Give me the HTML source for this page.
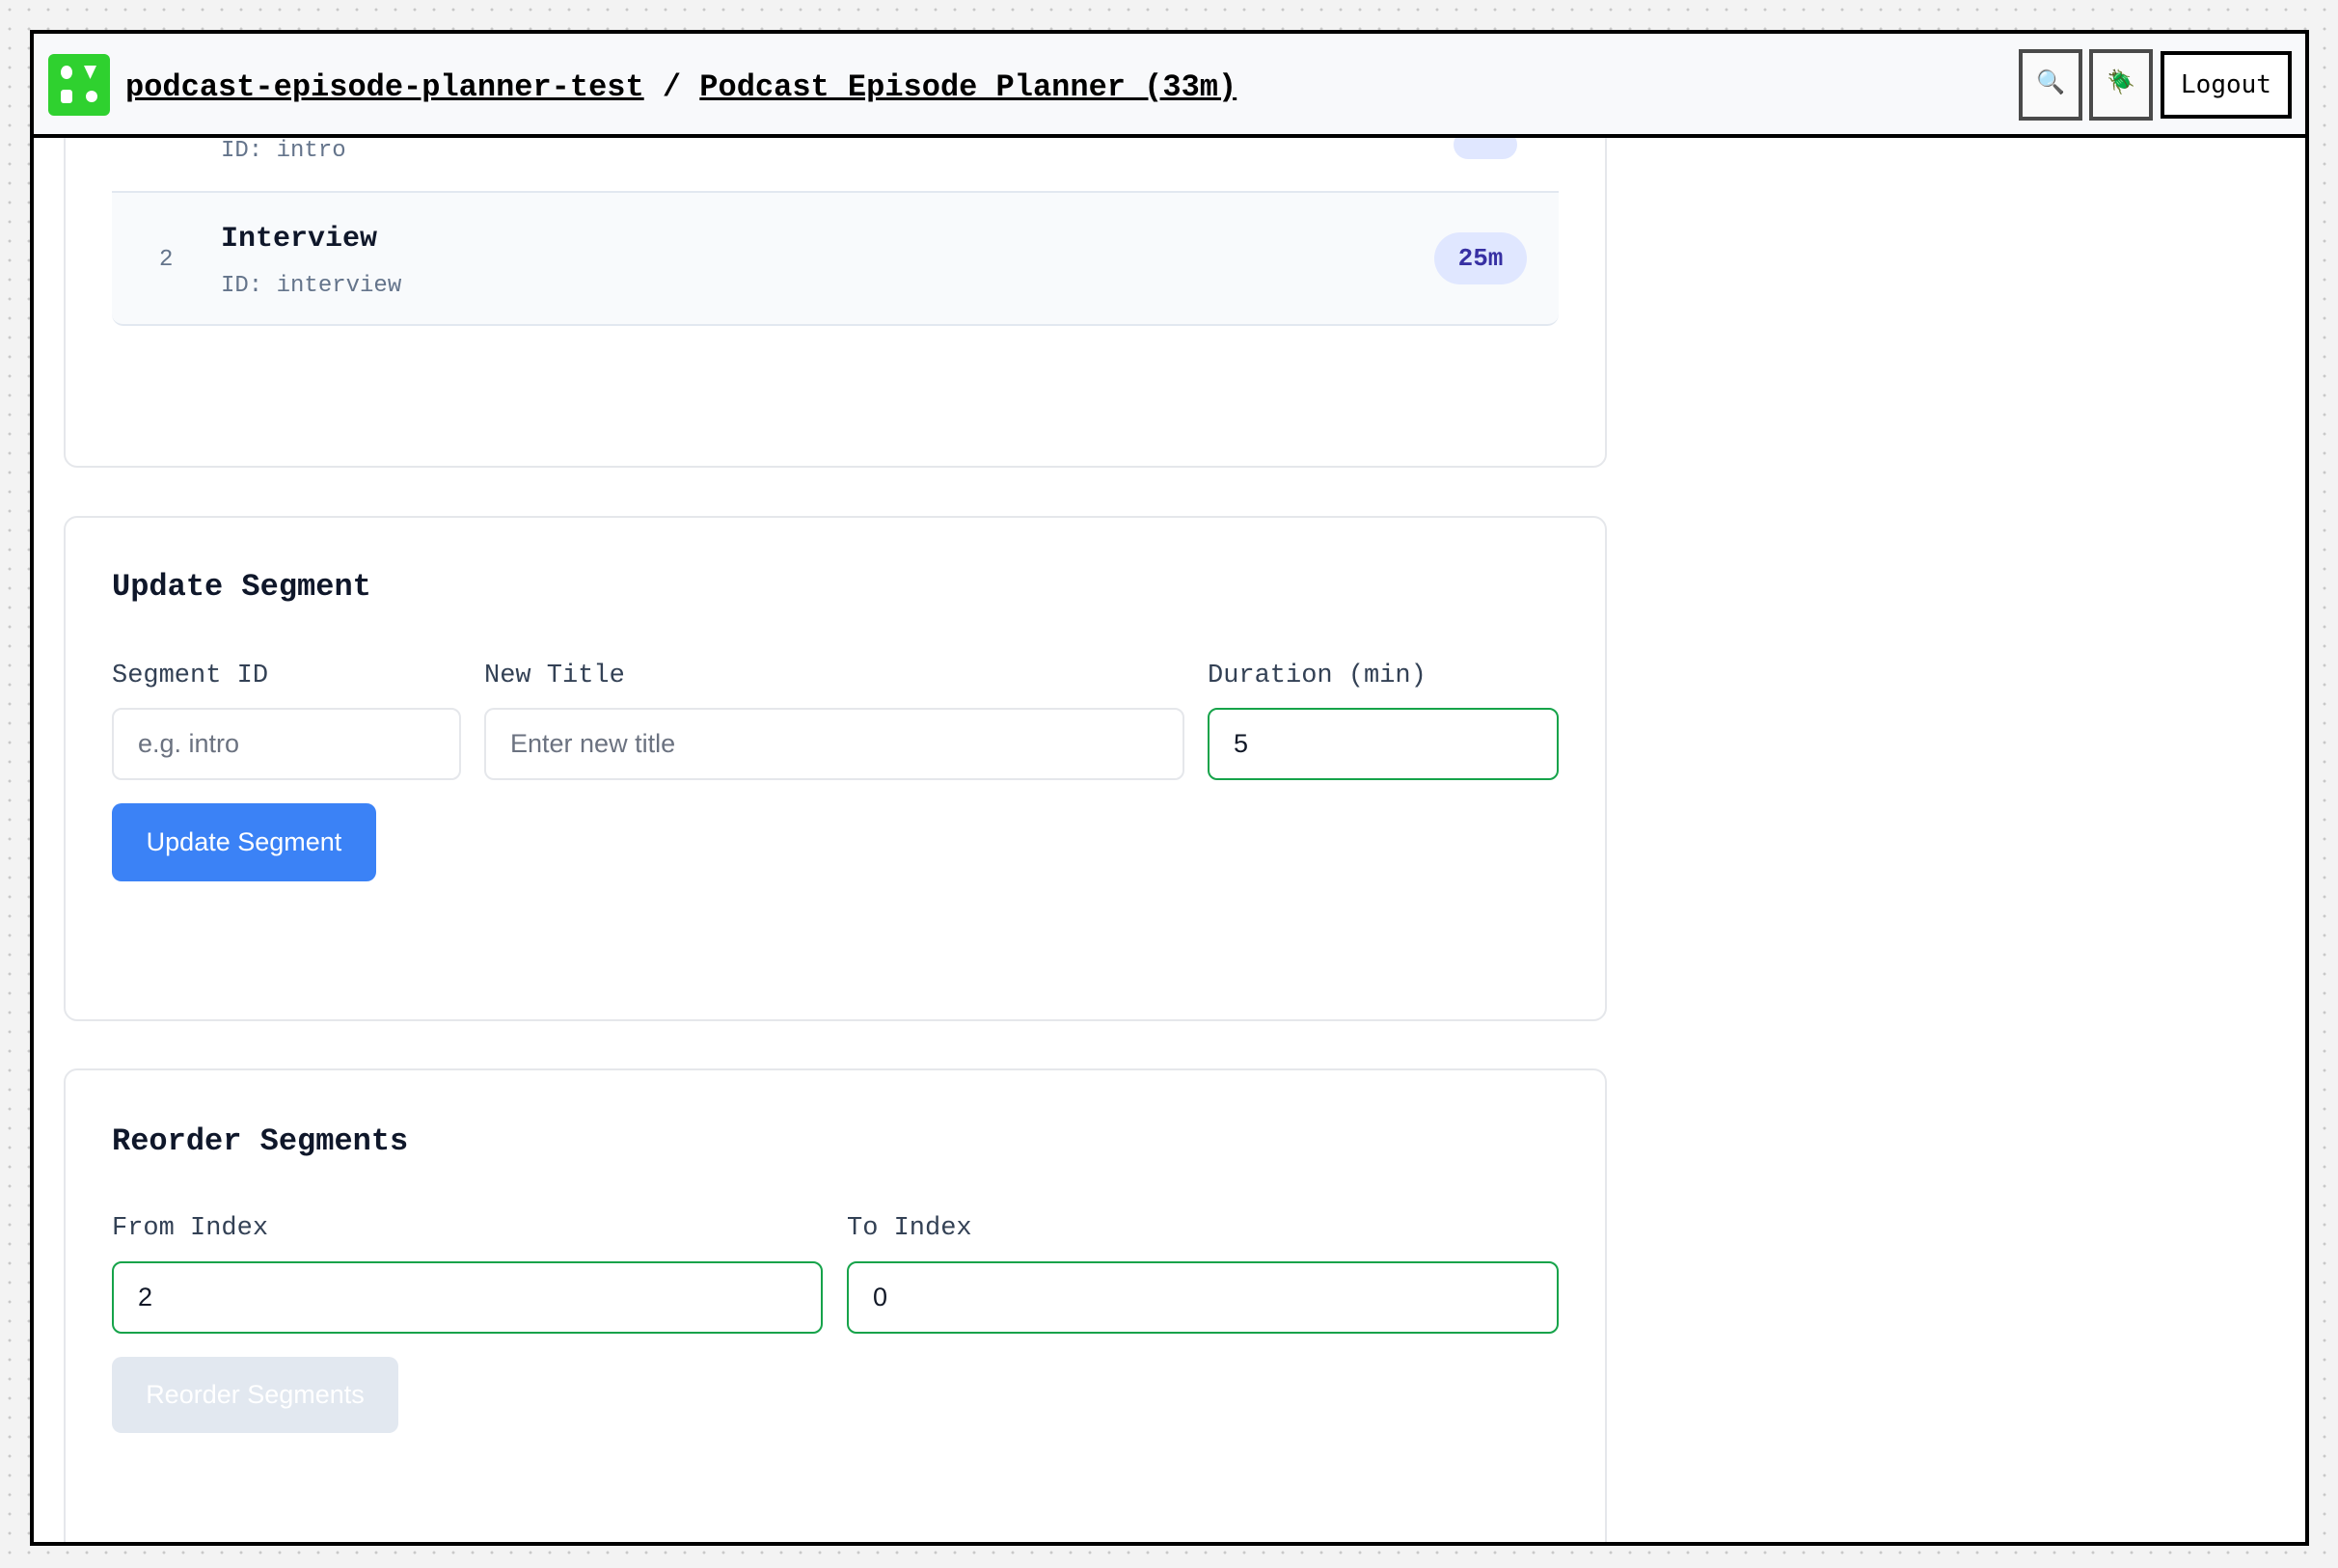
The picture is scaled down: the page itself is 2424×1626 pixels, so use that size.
<!DOCTYPE html>
<html><head><meta charset="utf-8"><style>
*{box-sizing:border-box;margin:0;padding:0}
html,body{width:2424px;height:1626px;overflow:hidden}
body{background-color:#f3f3f3;background-image:radial-gradient(circle,#c8c8c8 1.3px,transparent 1.6px);background-size:20px 20px;background-position:0 0;position:relative;font-family:"Liberation Mono","DejaVu Sans Mono",monospace}
.frame{position:absolute;left:31px;top:31px;width:2363px;height:1572px;border:4px solid #000;background:#fff;overflow:hidden}
.a{position:absolute}
.card{position:absolute;left:31px;width:1600px;border:2px solid #e5e7eb;border-radius:14px;background:#fff}
.h2{position:absolute;left:81px;font-weight:bold;font-size:32px;color:#0f172a}
.lbl{position:absolute;font-size:27px;color:#334155}
.inp{position:absolute;height:75px;border:2px solid #e5e7eb;border-radius:10px;font-family:"Liberation Sans",sans-serif;font-size:27px;color:#6b7280;padding-left:25px;line-height:71px}
.inp.g{border-color:#16a34a;color:#111827}
.btn{position:absolute;border-radius:10px;font-family:"Liberation Sans",sans-serif;font-size:27px;color:#fff;text-align:center}
</style></head><body>
<div class="frame">
  <div class="card" style="top:-200px;height:650px"></div>
  <div class="a" style="left:194px;top:108px;font-size:24px;color:#64748b">ID: intro</div>
  <div class="a" style="left:1472px;top:100px;width:66px;height:30px;border-radius:16px;background:#e0e7ff"></div>
  <div class="a" style="left:81px;top:163px;width:1500px;height:140px;background:#f8fafc;border-top:2px solid #e2e8f0;border-bottom:2px solid #e2e8f0;border-radius:0 0 12px 12px"></div>
  <div class="a" style="left:130px;top:221px;font-size:24px;color:#64748b">2</div>
  <div class="a" style="left:194px;top:196px;font-size:30px;font-weight:bold;color:#0f172a">Interview</div>
  <div class="a" style="left:194px;top:248px;font-size:24px;color:#64748b">ID: interview</div>
  <div class="a" style="left:1452px;top:206px;width:96px;height:54px;border-radius:27px;background:#e0e7ff;color:#3730a3;font-weight:bold;font-size:26px;text-align:center;line-height:54px">25m</div>

  <div class="card" style="top:500px;height:524px"></div>
  <div class="h2" style="top:555px">Update Segment</div>
  <div class="lbl" style="left:81px;top:651px">Segment ID</div>
  <div class="lbl" style="left:467px;top:651px">New Title</div>
  <div class="lbl" style="left:1217px;top:651px">Duration (min)</div>
  <div class="inp" style="left:81px;top:699px;width:362px">e.g. intro</div>
  <div class="inp" style="left:467px;top:699px;width:726px">Enter new title</div>
  <div class="inp g" style="left:1217px;top:699px;width:364px">5</div>
  <div class="btn" style="left:81px;top:798px;width:274px;height:81px;background:#3b82f6;line-height:81px">Update Segment</div>

  <div class="card" style="top:1073px;height:520px"></div>
  <div class="h2" style="top:1130px">Reorder Segments</div>
  <div class="lbl" style="left:81px;top:1224px">From Index</div>
  <div class="lbl" style="left:843px;top:1224px">To Index</div>
  <div class="inp g" style="left:81px;top:1273px;width:737px">2</div>
  <div class="inp g" style="left:843px;top:1273px;width:738px">0</div>
  <div class="btn" style="left:81px;top:1372px;width:297px;height:79px;background:#e2e8f0;line-height:79px">Reorder Segments</div>

  <div class="a" style="left:0;top:0;width:2355px;height:108px;background:#f8f9fb;border-bottom:4px solid #000"></div>
  <div class="a" style="left:15px;top:21px;width:64px;height:64px;background:#2fd12f;border-radius:6px">
    <svg width="64" height="64" viewBox="0 0 64 64"><ellipse cx="19" cy="19" rx="6" ry="7" fill="#fff"/><path d="M37 12h13l-6.5 14z" fill="#fff"/><rect x="13" y="37" width="12" height="14" rx="3" fill="#fff"/><circle cx="45" cy="44" r="6" fill="#fff"/></svg>
  </div>
  <div class="a" style="left:95px;top:37px;font-size:32px;font-weight:bold;color:#000;white-space:pre"><span style="text-decoration:underline">podcast-episode-planner-test</span> / <span style="text-decoration:underline">Podcast Episode Planner (33m)</span></div>
  <div class="a" style="left:2058px;top:16px;width:66px;height:74px;border:4px solid #4a4a4a;background:#fafafa;text-align:center;line-height:66px;font-size:24px">🔍</div>
  <div class="a" style="left:2131px;top:16px;width:66px;height:74px;border:4px solid #4a4a4a;background:#fafafa;text-align:center;line-height:66px;font-size:24px">🪲</div>
  <div class="a" style="left:2205px;top:18px;width:136px;height:70px;border:4px solid #000;background:#fff;text-align:center;line-height:62px;font-family:'DejaVu Sans Mono',monospace;font-size:26px;color:#000">Logout</div>
</div>
</body></html>
